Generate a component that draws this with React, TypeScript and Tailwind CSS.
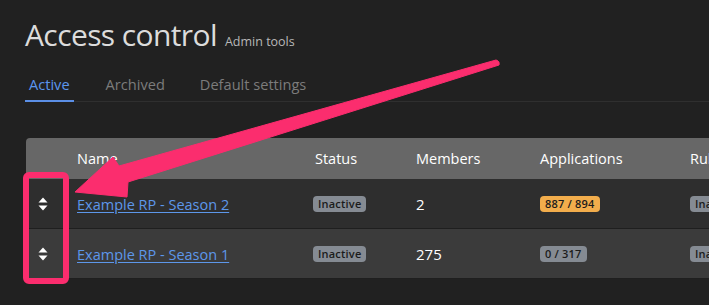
import { Fragment } from 'react'

type Row = {
  name: string
  members: string
  apps: string
  appsTone: 'warn' | 'muted'
}

const rows: Row[] = [
  { name: 'Example RP - Season 2', members: '2', apps: '887 / 894', appsTone: 'warn' },
  { name: 'Example RP - Season 1', members: '275', apps: '0 / 317', appsTone: 'muted' },
]

function SortHandle() {
  return (
    <svg width="10" height="14" viewBox="0 0 10 14" className="text-white">
      <path d="M5 0.5 L9.5 5.5 L0.5 5.5 Z" fill="currentColor" />
      <path d="M0.5 8.5 L9.5 8.5 L5 13.5 Z" fill="currentColor" />
    </svg>
  )
}

function Badge({ children, tone }: { children: React.ReactNode; tone: 'warn' | 'muted' }) {
  return (
    <span
      className={
        'inline-block rounded-[4px] px-[5px] py-[1px] text-[11px] font-semibold leading-[14px] tracking-[0.2px] text-[#1b1b1b] ' +
        (tone === 'warn' ? 'bg-[#f2ad4c]' : 'bg-[#858b93]')
      }
    >
      {children}
    </span>
  )
}

export default function App() {
  return (
    <div className="relative h-[305px] w-[709px] overflow-hidden bg-[#212121] font-['Open_Sans',sans-serif]">
      <div className="pl-[25px] pt-[17px]">
        <div className="flex items-baseline gap-[8px]">
          <h1 className="text-[30px] font-normal leading-[36px] tracking-[-0.6px] text-[#dcdcdc]">Access control</h1>
          <span className="text-[12.5px] text-[#b8b8b8]">Admin tools</span>
        </div>

        {/* Tabs */}
        <div className="mt-[21px] flex border-b border-[#2f2f2f] text-[14.6px]">
          <div className="-mb-px border-b-2 border-[#5b8fe6] px-[4px] pb-[4px] text-[#5b96ee]">Active</div>
          <div className="ml-[32px] pb-[4px] text-[#7c7c7c]">Archived</div>
          <div className="ml-[35px] pb-[4px] text-[#7c7c7c]">Default settings</div>
        </div>

        {/* Table */}
        <div className="ml-[1px] mt-[36px] w-[800px] overflow-hidden rounded-t-[4px]">
          <div className="grid grid-cols-[51px_238px_101px_124px_150px_136px] text-[14.5px]">
            <div className="h-[41px] bg-[#676767]" />
            {['Name', 'Status', 'Members', 'Applications', 'Rules'].map((h) => (
              <div key={h} className="flex h-[41px] items-center bg-[#676767] font-medium text-white">
                {h}
              </div>
            ))}
            {rows.map((r, i) => {
              const bg = i === 0 ? 'bg-[#2e2e2e]' : 'bg-[#3b3b3b]'
              const cell = `flex h-[50px] items-center border-b border-[#1f1f1f] pt-[2px] ${bg}`
              return (
                <Fragment key={r.name}>
                  <div className={`${cell} pl-[12px]`}>
                    <SortHandle />
                  </div>
                  <div className={cell}>
                    <a href="#" className="text-[14.5px] text-[#5d97ea] underline underline-offset-2">
                      {r.name}
                    </a>
                  </div>
                  <div className={`${cell} -ml-[2px]`}>
                    <Badge tone="muted">Inactive</Badge>
                  </div>
                  <div className={`${cell} text-[15px] text-white`}>{r.members}</div>
                  <div className={cell}>
                    <Badge tone={r.appsTone}>{r.apps}</Badge>
                  </div>
                  <div className={cell}>
                    <Badge tone="muted">Inactive</Badge>
                  </div>
                </Fragment>
              )
            })}
          </div>
        </div>
      </div>

      {/* Annotation overlay */}
      <svg className="pointer-events-none absolute left-0 top-0" width="709" height="305" viewBox="0 0 709 305">
        <rect x="26" y="175" width="40" height="106" rx="3" fill="none" stroke="#fb2d6e" strokeWidth="6" />
        <path
          d="M75 192 L113 157 L119 166 L496 60 Q500 61 499 65 L128 182 L127 197 Z"
          fill="#fb2d6e"
          stroke="#fb2d6e"
          strokeWidth="1"
          strokeLinejoin="round"
        />
      </svg>
    </div>
  )
}
